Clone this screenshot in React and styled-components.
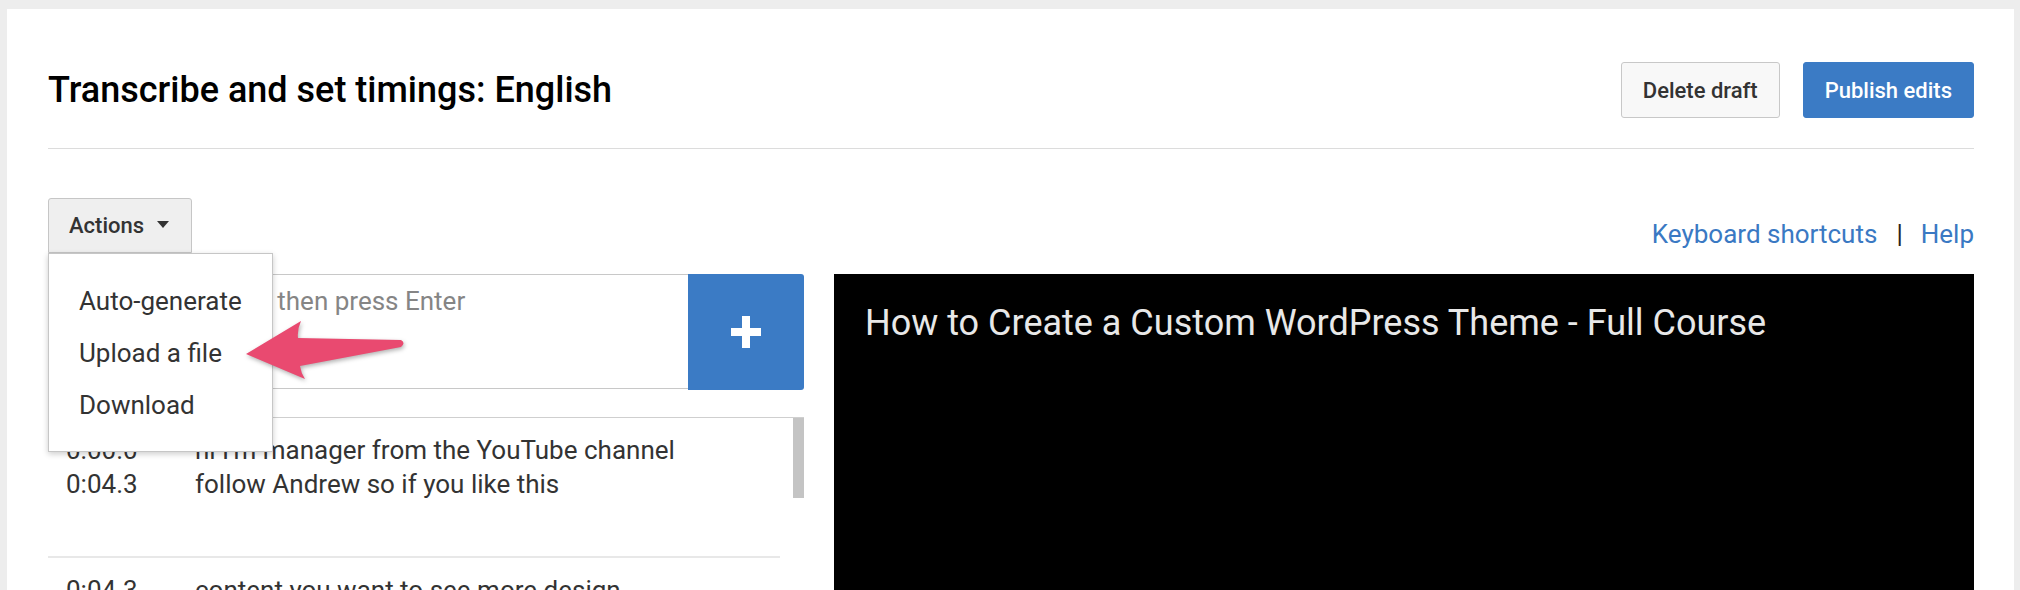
import React from "react";
import styled, { createGlobalStyle } from "styled-components";

const Global = createGlobalStyle`
  html, body { margin: 0; padding: 0; background: #ededed; overflow: hidden; }
  body { font-family: Roboto, "Noto Sans", Arial, sans-serif; color: #333; }
  * { box-sizing: border-box; }
`;

const Page = styled.div`
  padding: 9px 6px 0 7px;
`;

const Panel = styled.div`
  position: relative;
  background: #fff;
  padding: 53px 40px 0 41px;
  min-height: 760px;
`;

const Header = styled.header`
  display: flex;
  align-items: center;
  justify-content: space-between;
  padding-bottom: 30px;
  border-bottom: 1px solid #dcdcdc;
`;

const Title = styled.h1`
  margin: 0;
  font-size: 36px;
  line-height: 40px;
  font-weight: 500;
  color: #000;
`;

const HeaderActions = styled.div`
  display: flex;
  gap: 23px;
`;

const Button = styled.button`
  height: 56px;
  padding: 0 21px;
  font-family: inherit;
  font-size: 22px;
  font-weight: 500;
  border-radius: 3px;
  border: 1px solid ${(p) => (p.$primary ? "#3b7bc5" : "#c8c8c8")};
  background: ${(p) => (p.$primary ? "#3b7bc5" : "#f8f8f8")};
  color: ${(p) => (p.$primary ? "#fff" : "#333")};
`;

const Toolbar = styled.div`
  display: flex;
  justify-content: space-between;
  align-items: flex-end;
  margin: 49px 0 21px;
`;

const ActionsWrap = styled.div`
  position: relative;
`;

const ActionsButton = styled.button`
  height: 55px;
  padding: 0 22px 0 20px;
  display: inline-flex;
  align-items: center;
  gap: 13px;
  background: #efefef;
  border: 1px solid #c6c6c6;
  border-radius: 3px 3px 0 0;
  font-family: inherit;
  font-size: 22px;
  font-weight: 500;
  color: #333;
`;

const Caret = styled.span`
  width: 0;
  height: 0;
  margin-top: -3px;
  border-left: 6px solid transparent;
  border-right: 6px solid transparent;
  border-top: 7px solid #333;
`;

const Menu = styled.ul`
  position: absolute;
  top: 100%;
  left: 0;
  width: 225px;
  margin: 0;
  padding: 21px 0 20px;
  list-style: none;
  background: #fff;
  border: 1px solid #c6c6c6;
  box-shadow: 0 2px 6px rgba(0, 0, 0, 0.2);
  z-index: 5;
`;

const MenuItem = styled.li`
  padding: 0 30px;
  line-height: 52px;
  font-size: 26px;
  color: #333;
  white-space: nowrap;
`;

const Links = styled.div`
  display: flex;
  align-items: center;
  font-size: 26px;
  line-height: 30px;
  padding-bottom: 4px;
`;

const Link = styled.a`
  color: #3a79c3;
  text-decoration: none;
`;

const Sep = styled.span`
  margin: 0 18px 0 19px;
  color: #222;
`;

const Main = styled.div`
  display: grid;
  grid-template-columns: 756px 1140px;
  column-gap: 30px;
  align-items: start;
`;

const LeftCol = styled.div`
  display: flex;
  flex-direction: column;
`;

const InputRow = styled.div`
  display: flex;
  align-items: flex-start;
`;

const TextBox = styled.textarea`
  flex: 1;
  height: 115px;
  border: 1px solid #c8c8c8;
  border-right: none;
  padding: 11px 6px;
  font-family: inherit;
  font-size: 26px;
  line-height: 30px;
  color: #333;
  resize: none;
  outline: none;
  &::placeholder { color: #858585; }
`;

const AddButton = styled.button`
  width: 116px;
  height: 116px;
  border: none;
  border-radius: 0 3px 3px 0;
  background: #3b7bc5;
  display: flex;
  align-items: center;
  justify-content: center;
  padding: 0;
`;

const List = styled.div`
  position: relative;
  margin-top: 27px;
  border-top: 1px solid #cfcfcf;
`;

const ScrollThumb = styled.div`
  position: absolute;
  right: 0;
  top: 0;
  width: 11px;
  height: 80px;
  background: #c4c4c4;
`;

const Row = styled.div`
  display: grid;
  grid-template-columns: 129px 1fr;
  margin-right: 24px;
  padding: 15px 0 55px 18px;
  border-bottom: 2px solid #e8e8e8;
  font-size: 26px;
  line-height: 34px;
  color: #333;
`;

const Cell = styled.div`
  display: flex;
  flex-direction: column;
  white-space: nowrap;
`;

const Video = styled.div`
  background: #000;
  height: 640px;
  padding: 28px 31px;
  color: #e8e8e8;
  font-size: 36px;
  line-height: 42px;
`;

const ArrowSvg = styled.svg`
  position: absolute;
  left: 237px;
  top: 309px;
  overflow: visible;
  filter: drop-shadow(1px 2px 2px rgba(0, 0, 0, 0.3));
  z-index: 6;
`;

const rows = [
  { t: ["0:00.0", "0:04.3"], l: ["hi I'm manager from the YouTube channel", "follow Andrew so if you like this"] },
  { t: ["0:04.3", "0:07.9"], l: ["content you want to see more design", "tutorials like this please subscribe"] },
];

export default function App() {
  return (
    <>
      <Global />
      <Page>
        <Panel>
          <Header>
            <Title>Transcribe and set timings: English</Title>
            <HeaderActions>
              <Button>Delete draft</Button>
              <Button $primary>Publish edits</Button>
            </HeaderActions>
          </Header>

          <Toolbar>
            <ActionsWrap>
              <ActionsButton>
                Actions <Caret />
              </ActionsButton>
              <Menu>
                <MenuItem>Auto-generate</MenuItem>
                <MenuItem>Upload a file</MenuItem>
                <MenuItem>Download</MenuItem>
              </Menu>
            </ActionsWrap>
            <Links>
              <Link href="#">Keyboard shortcuts</Link>
              <Sep>|</Sep>
              <Link href="#">Help</Link>
            </Links>
          </Toolbar>

          <Main>
            <LeftCol>
              <InputRow>
                <TextBox placeholder="Type what you say, then press Enter" />
                <AddButton aria-label="Add">
                  <svg width="30" height="32" viewBox="0 0 30 32">
                    <rect x="11" y="0" width="8" height="32" fill="#fff" />
                    <rect x="0" y="12" width="30" height="8" fill="#fff" />
                  </svg>
                </AddButton>
              </InputRow>
              <List>
                <ScrollThumb />
                {rows.map((r, i) => (
                  <Row key={i}>
                    <Cell>
                      <span>{r.t[0]}</span>
                      <span>{r.t[1]}</span>
                    </Cell>
                    <Cell>
                      <span>{r.l[0]}</span>
                      <span>{r.l[1]}</span>
                    </Cell>
                  </Row>
                ))}
              </List>
            </LeftCol>
            <Video>How to Create a Custom WordPress Theme - Full Course</Video>
          </Main>

          <ArrowSvg width="166" height="66" viewBox="0 0 166 66">
            <path
              d="M2 36 L57 3 Q53 12 54 20 L157 22 Q162 25 157 29 L56 48 Q57 55 61 61 Z"
              fill="#e94a70"
            />
          </ArrowSvg>
        </Panel>
      </Page>
    </>
  );
}
